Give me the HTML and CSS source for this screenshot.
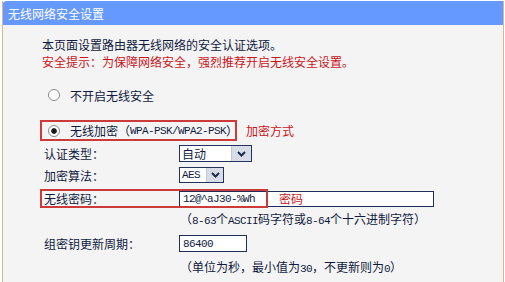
FILE: index.html
```html
<!DOCTYPE html>
<html lang="zh-CN">
<head>
<meta charset="utf-8">
<title>无线网络安全设置</title>
<link rel="stylesheet" href="styles.css">
</head>
<body>
<div class="panel">
  <div class="hdr">无线网络安全设置</div>
  <div class="body">
    <p class="intro">本页面设置路由器无线网络的安全认证选项。<br><span class="red">安全提示：为保障网络安全，强烈推荐开启无线安全设置。</span></p>
    <div class="opt opt1"><span class="radio"></span>不开启无线安全</div>
    <div class="opt2row">
      <div class="opt boxed"><span class="radio on"></span>无线加密（<span class="en">WPA-PSK/WPA2-PSK</span>）</div>
      <span class="red note">加密方式</span>
    </div>
    <div class="row r1">
      <span class="lbl">认证类型：</span>
      <span class="sel sel1"><span class="val">自动</span><span class="btn"><svg width="9" height="6" viewBox="0 0 9 6"><path d="M1 1 L4.5 4.5 L8 1" fill="none" stroke="#1c2a50" stroke-width="2"/></svg></span></span>
    </div>
    <div class="row r2">
      <span class="lbl">加密算法：</span>
      <span class="sel sel2"><span class="val en">AES</span><span class="btn"><svg width="9" height="6" viewBox="0 0 9 6"><path d="M1 1 L4.5 4.5 L8 1" fill="none" stroke="#1c2a50" stroke-width="2"/></svg></span></span>
    </div>
    <div class="row r3">
      <span class="lbl">无线密码：</span>
      <span class="inp inp1"><span class="en">12@^aJ30-%Wh</span></span>
      <span class="red note2">密码</span>
    </div>
    <div class="hint h1">（<span class="en">8-63</span>个<span class="en">ASCII</span>码字符或<span class="en">8-64</span>个十六进制字符）</div>
    <div class="row r5">
      <span class="lbl">组密钥更新周期：</span>
      <span class="inp inp2"><span class="en">86400</span></span>
    </div>
    <div class="hint h2">（单位为秒，最小值为<span class="en">30</span>，不更新则为<span class="en">0</span>）</div>
  </div>
</div>
</body>
</html>
```
FILE: styles.css
```css
html, body {
  margin: 0;
  padding: 0;
  background: #ffffff;
}
body {
  font-family: "Noto Sans CJK SC", "Noto Sans", sans-serif;
  font-size: 12px;
  color: #101a40;
}
.panel {
  margin: 1px 0 0 2px;
  width: 502px;
  height: 281px;
  box-sizing: border-box;
  background: #f4f4f4;
  border-left: 1px solid #dbb68c;
  border-right: 1px solid #dbb68c;
  overflow: hidden;
}
.hdr {
  margin: 0 -1px;
  height: 24px;
  line-height: 25px;
  padding-left: 6px;
  background: #6699ff;
  color: #ffffff;
  font-size: 12px;
  border-radius: 5px 0 0 0;
}
.body {
  position: relative;
}
.red {
  color: #c8161c;
}
.en {
  font-family: "Liberation Mono", monospace;
  font-size: 11px;
  letter-spacing: -0.6px;
}
.intro {
  margin: 0;
  padding: 11px 0 0 39px;
  line-height: 17px;
}
.opt {
  display: flex;
  align-items: center;
  white-space: nowrap;
}
.radio {
  display: inline-block;
  width: 12px;
  height: 12px;
  box-sizing: border-box;
  border-radius: 50%;
  border: 1px solid #8a8a8a;
  background: #ffffff;
  margin-right: 10px;
  flex: none;
}
.radio.on {
  background: radial-gradient(circle, #1a1a1a 0, #1a1a1a 2.4px, #ffffff 3.2px);
}
.opt1 {
  margin: 16px 0 0 45px;
  height: 18px;
}
.opt2row {
  display: flex;
  align-items: center;
  margin: 16px 0 0 37px;
}
.boxed {
  width: 197px;
  height: 21px;
  box-sizing: border-box;
  border: 2px solid #cc3a3a;
  padding-left: 6px;
}
.note {
  margin-left: 9px;
}
.row {
  display: flex;
  align-items: center;
  padding-left: 41px;
  position: relative;
}
.lbl {
  width: 135px;
  flex: none;
}
.r1 { margin-top: 4px; height: 17px; }
.r2 { margin-top: 5px; height: 16px; }
.r3 { margin-top: 6px; height: 19px; }
.r5 { margin-top: 6px; height: 17px; }
.r3::before {
  content: "";
  position: absolute;
  left: 37px;
  top: 0;
  width: 228px;
  height: 19px;
  box-sizing: border-box;
  border: 2px solid #cc3a3a;
}
.note2 {
  position: absolute;
  left: 276px;
  top: 1px;
  line-height: 17px;
}
.sel {
  display: inline-flex;
  box-sizing: border-box;
  border: 1px solid #22325a;
  background: #ffffff;
}
.sel .val {
  flex: 1;
  padding-left: 2px;
  line-height: 15px;
}
.sel .btn {
  display: flex;
  align-items: center;
  justify-content: center;
  background: #d8dce6;
  border-left: 1px solid #c4c9d4;
}
.sel1 { width: 73px; height: 17px; }
.sel1 .btn { width: 19px; }
.sel2 { width: 45px; height: 16px; }
.sel2 .btn { width: 16px; }
.sel2 .val { line-height: 14px; }
.inp {
  display: inline-flex;
  align-items: center;
  box-sizing: border-box;
  border: 1px solid #1f2f58;
  background: #ffffff;
  padding-left: 3px;
}
.inp1 { width: 255px; height: 16px; }
.inp2 { width: 68px; height: 17px; }
.hint {
  padding-left: 177px;
  line-height: 16px;
  white-space: nowrap;
}
.h1 { margin-top: 3px; }
.h2 { margin-top: 7px; }
```
